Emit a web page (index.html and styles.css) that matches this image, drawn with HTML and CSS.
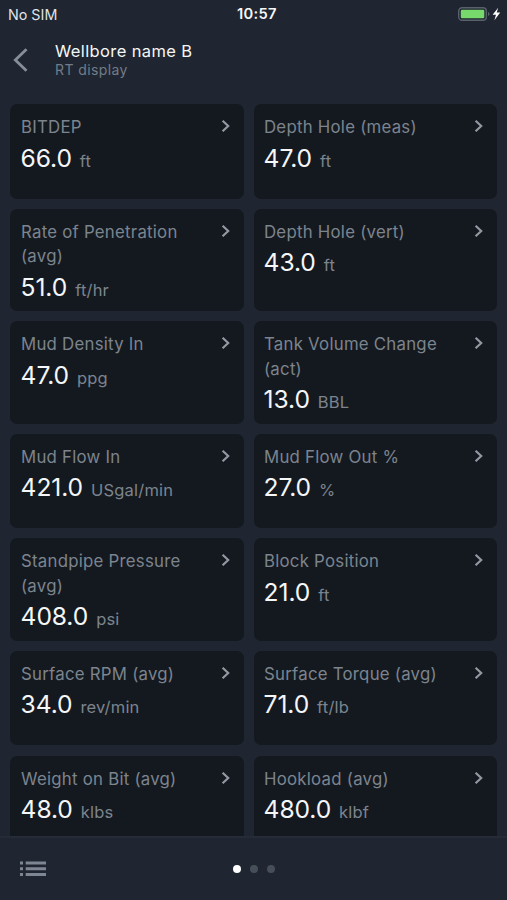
FILE: index.html
```html
<!DOCTYPE html>
<html lang="en">
<head>
<meta charset="utf-8">
<title>RT display</title>
<link rel="stylesheet" href="styles.css">
</head>
<body>
<svg class="defs" width="0" height="0" aria-hidden="true"><symbol id="chevron" viewBox="0 0 10 14"><path d="M1.6 1.7 7.2 7 1.6 12.3"/></symbol></svg>
<div class="status">
  <span class="carrier">No SIM</span>
  <span class="clock">10:57</span>
  <svg class="battery" width="46" height="16" viewBox="0 0 46 16"><rect x="1.7" y="1.7" width="27.6" height="12.6" rx="3.4" fill="none" stroke="#59616a" stroke-width="1.4"/><rect x="3.8" y="3.7" width="23.5" height="8.6" rx="1.2" fill="#77d86b"/><path d="M31 5.9q1.6.5 1.6 2.1T31 10.1z" fill="#59616a"/><path d="M41.2 1.8 35.6 8.7h3.4l-1.6 5.5 5.8-7.6h-3.5z" fill="#fff"/></svg>
</div>
<header class="header">
  <svg class="back" width="16" height="26" viewBox="0 0 16 26"><path d="M14.5 2.2 3.3 13l11.2 10.8"/></svg>
  <div><h1 class="title">Wellbore name B</h1><p class="subtitle">RT display</p></div>
</header>
<main class="cards">
  <section class="card"><h2 class="label">BITDEP</h2><svg class="chevron"><use href="#chevron"/></svg><p class="reading"><b class="value">66.0</b><span class="unit">ft</span></p></section>
  <section class="card"><h2 class="label">Depth Hole (meas)</h2><svg class="chevron"><use href="#chevron"/></svg><p class="reading"><b class="value">47.0</b><span class="unit">ft</span></p></section>
  <section class="card"><h2 class="label">Rate of Penetration (avg)</h2><svg class="chevron"><use href="#chevron"/></svg><p class="reading"><b class="value">51.0</b><span class="unit">ft/hr</span></p></section>
  <section class="card"><h2 class="label">Depth Hole (vert)</h2><svg class="chevron"><use href="#chevron"/></svg><p class="reading"><b class="value">43.0</b><span class="unit">ft</span></p></section>
  <section class="card"><h2 class="label">Mud Density In</h2><svg class="chevron"><use href="#chevron"/></svg><p class="reading"><b class="value">47.0</b><span class="unit">ppg</span></p></section>
  <section class="card"><h2 class="label">Tank Volume Change (act)</h2><svg class="chevron"><use href="#chevron"/></svg><p class="reading"><b class="value">13.0</b><span class="unit">BBL</span></p></section>
  <section class="card"><h2 class="label">Mud Flow In</h2><svg class="chevron"><use href="#chevron"/></svg><p class="reading"><b class="value">421.0</b><span class="unit">USgal/min</span></p></section>
  <section class="card"><h2 class="label">Mud Flow Out %</h2><svg class="chevron"><use href="#chevron"/></svg><p class="reading"><b class="value">27.0</b><span class="unit">%</span></p></section>
  <section class="card"><h2 class="label">Standpipe Pressure (avg)</h2><svg class="chevron"><use href="#chevron"/></svg><p class="reading"><b class="value">408.0</b><span class="unit">psi</span></p></section>
  <section class="card"><h2 class="label">Block Position</h2><svg class="chevron"><use href="#chevron"/></svg><p class="reading"><b class="value">21.0</b><span class="unit">ft</span></p></section>
  <section class="card"><h2 class="label">Surface RPM (avg)</h2><svg class="chevron"><use href="#chevron"/></svg><p class="reading"><b class="value">34.0</b><span class="unit">rev/min</span></p></section>
  <section class="card"><h2 class="label">Surface Torque (avg)</h2><svg class="chevron"><use href="#chevron"/></svg><p class="reading"><b class="value">71.0</b><span class="unit">ft/lb</span></p></section>
  <section class="card"><h2 class="label">Weight on Bit (avg)</h2><svg class="chevron"><use href="#chevron"/></svg><p class="reading"><b class="value">48.0</b><span class="unit">klbs</span></p></section>
  <section class="card"><h2 class="label">Hookload (avg)</h2><svg class="chevron"><use href="#chevron"/></svg><p class="reading"><b class="value">480.0</b><span class="unit">klbf</span></p></section>
</main>
<footer class="toolbar">
  <svg class="list" width="26" height="16" viewBox="0 0 26 16"><path d="M0 .5h3v3H0zM5.7.5H26v3H5.7zM0 6.3h3v3H0zM5.7 6.3H26v3H5.7zM0 12.1h3v3H0zM5.7 12.1H26v3H5.7z"/></svg>
  <div class="dots"><i class="dot active"></i><i class="dot"></i><i class="dot"></i></div>
</footer>
</body>
</html>
```
FILE: styles.css
```css
* { box-sizing: border-box; margin: 0; }
body {
  display: flex;
  flex-direction: column;
  height: 900px;
  overflow: hidden;
  background: #1f2631;
  color: #f4f6f8;
  font-family: Inter, sans-serif;
}
.defs { display: none; }
.status {
  display: grid;
  grid-template-columns: 1fr auto 1fr;
  align-items: center;
  height: 28px;
  padding: 0 4px 0 8px;
  flex: none;
}
.carrier { font-size: 14.3px; color: #dfe3e8; }
.clock { font-size: 14.7px; font-weight: 600; letter-spacing: 0.3px; padding-left: 3px; }
.battery { justify-self: end; margin-top: -1px; }
.header {
  display: flex;
  align-items: center;
  height: 76px;
  padding: 0 0 14px 12px;
  gap: 27px;
  flex: none;
}
.back { fill: none; stroke: #858e9a; stroke-width: 2.8; margin-top: 1px; }
.title { font-size: 16.5px; font-weight: 400; line-height: 20px; letter-spacing: 0.38px; }
.subtitle { font-size: 14px; line-height: 17px; letter-spacing: 0.4px; color: #737c88; }
.cards {
  display: grid;
  grid-template-columns: 234px 243px;
  grid-auto-rows: max-content;
  align-content: start;
  gap: 10.1px 10px;
  padding: 0 10px;
  flex: 1;
  min-height: 0;
  overflow: hidden;
}
.card {
  display: grid;
  grid-template-columns: 1fr 10px;
  align-content: start;
  min-height: 94.6px;
  padding: 11px 13px 3.4px 11px;
  border-radius: 7px;
  background: #141920;
}
.card:nth-child(even) { padding-left: 10px; }
.label { font-size: 16.8px; font-weight: 400; line-height: 24.5px; letter-spacing: 0.25px; color: #7c848e; padding-right: 20px; }
.chevron { width: 10px; height: 14px; margin-top: 4px; }
.chevron, #chevron { fill: none; stroke: #9299a2; stroke-width: 2.2; }
.reading { grid-column: 1 / -1; display: flex; align-items: baseline; gap: 8px; margin-left: -0.4px; line-height: 36px; }
.value { font-size: 24.6px; font-weight: 400; letter-spacing: -0.1px; }
.unit { font-size: 16.5px; letter-spacing: 0.2px; color: #7c848e; }
.toolbar {
  position: relative;
  display: flex;
  align-items: center;
  justify-content: center;
  height: 64px;
  border-top: 2px solid #252c37;
  flex: none;
}
.list { position: absolute; left: 20px; top: 23px; fill: #7d8692; }
.dots { display: flex; gap: 9px; }
.dot { width: 8px; height: 8px; border-radius: 50%; background: #464e59; }
.active { background: #fff; }
```
